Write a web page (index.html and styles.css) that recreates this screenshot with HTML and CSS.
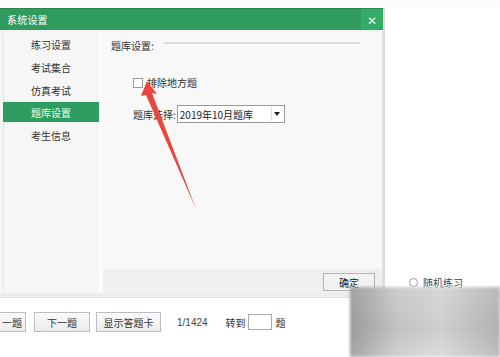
FILE: index.html
```html
<!DOCTYPE html>
<html lang="zh">
<head>
<meta charset="utf-8">
<link rel="stylesheet" href="styles.css">
</head>
<body>
<div class="app">
  <div class="topgap"></div>
  <div class="main">
    <div class="dialog">
      <div class="titlebar">
        <span class="title">系统设置</span>
        <span class="close">✕</span>
      </div>
      <div class="dbody">
        <div class="sidebar">
          <div class="nav">练习设置</div>
          <div class="nav">考试集合</div>
          <div class="nav">仿真考试</div>
          <div class="nav active">题库设置</div>
          <div class="nav">考生信息</div>
        </div>
        <div class="gutter"></div>
        <div class="right">
          <div class="content">
            <div class="section">
              <span class="stitle">题库设置:</span>
              <span class="sline"></span>
            </div>
            <label class="check"><span class="box"></span>排除地方题</label>
            <div class="selrow">
              <span class="sellabel">题库选择:</span>
              <span class="select"><span class="selval">2019年10月题库</span><span class="selbtn"><span class="tri"></span></span></span>
            </div>
          </div>
          <div class="footer">
            <span class="btn ok">确定</span>
          </div>
        </div>
      </div>
    </div>
    <div class="side">
      <div class="radio"><span class="circle"></span>随机练习</div>
    </div>
  </div>
  <div class="sep"></div>
  <div class="toolbar">
    <span class="tbtn first">一题</span>
    <span class="tbtn next">下一题</span>
    <span class="tbtn card">显示答题卡</span>
    <span class="count">1/1424</span>
    <span class="goto">转到</span>
    <span class="gbox"></span>
    <span class="ti">题</span>
  </div>
</div>
<div class="watermark"></div>
<svg class="arrow" width="500" height="357" viewBox="0 0 500 357">
  <polygon points="147,81 141,96 146,95 196,209 152,93 157,94" fill="#e8463e"/>
</svg>
</body>
</html>
```
FILE: styles.css
```css
* { box-sizing: border-box; }
html, body { margin: 0; padding: 0; }
body {
  width: 500px;
  height: 357px;
  overflow: hidden;
  background: #ffffff;
  font-family: "Noto Sans CJK SC", "Noto Sans", sans-serif;
  font-size: 10px;
  color: #333;
  position: relative;
}
.app { display: flex; flex-direction: column; width: 500px; height: 357px; }
.topgap { height: 8px; background: #fcfcfc; }
.main { display: flex; height: 285px; }
.dialog {
  width: 385px;
  display: flex;
  flex-direction: column;
  border-right: 2px solid #dcdcdc;
  background: #f4f4f4;
}
.titlebar {
  height: 22px;
  background: #2f9b5d;
  border-top: 1px solid #278650;
  display: flex;
  align-items: center;
  justify-content: space-between;
  padding-left: 7px;
  color: #fff;
}
.title { font-size: 10px; letter-spacing: 0.2px; }
.close {
  width: 22px;
  height: 21px;
  background: #35ab68;
  display: flex;
  align-items: center;
  justify-content: center;
  font-size: 12px;
  color: #e6fff0;
}
.dbody { flex: 1; display: flex; padding: 3px 0 0 3px; background: #f4f4f4; }
.sidebar {
  width: 96px;
  background: #f6f6f6;
  border-left: 1px solid #e6e6e6;
  display: flex;
  flex-direction: column;
  padding-top: 0;
}
.nav {
  height: 23px;
  display: flex;
  align-items: center;
  padding-left: 27px;
  font-size: 10px;
  color: #333;
}
.nav.active {
  background: #2f9d60;
  color: #e8fff0;
  height: 20px;
  margin: 0 -1px 0 -1px;
  padding-left: 28px;
}
.nav.active + .nav { margin-top: 2px; }
.gutter { width: 4px; background: #fbfbfb; }
.right { flex: 1; display: flex; flex-direction: column; border-right: 1px solid #e2e2e2; }
.content { flex: 1; background: #f8f8f8; padding: 5px 0 0 8px; }
.section { display: flex; align-items: center; height: 14px; }
.stitle { font-size: 10px; color: #333; }
.sline { flex: 1; height: 2px; background: #dcdcdc; margin: 0 22px 0 10px; position: relative; top: -2px; }
.check { display: flex; align-items: center; margin: 23px 0 0 22px; font-size: 10px; color: #333; }
.box { width: 10px; height: 10px; border: 1px solid #999; background: #fff; margin-right: 4px; }
.selrow { display: flex; align-items: center; margin: 15px 0 0 22px; }
.sellabel { font-size: 10px; color: #333; margin-right: 1px; }
.select {
  width: 108px;
  height: 18px;
  border: 1px solid #9a9a9a;
  background: #fff;
  display: flex;
  align-items: center;
  justify-content: space-between;
}
.selval { font-size: 10px; color: #222; padding-left: 2px; }
.selbtn { width: 12px; height: 14px; border-left: 1px solid #ddd; display: flex; align-items: center; justify-content: center; margin-right: 1px; }
.tri { width: 0; height: 0; border-left: 3px solid transparent; border-right: 3px solid transparent; border-top: 4px solid #222; }
.footer { height: 24px; background: #efefef; display: flex; align-items: flex-start; justify-content: flex-end; padding: 4px 7px 0 0; }
.btn {
  width: 52px;
  height: 18px;
  border: 1px solid #b4b4b4;
  background: #f2f2f2;
  display: flex;
  align-items: center;
  justify-content: center;
  font-size: 10px;
  color: #222;
}
.side { flex: 1; display: flex; flex-direction: column; justify-content: flex-end; padding: 0 0 3px 24px; }
.radio { display: flex; align-items: center; font-size: 10px; color: #444; }
.circle { width: 9px; height: 9px; border: 1px solid #999; border-radius: 50%; margin-right: 5px; }
.sep { height: 5px; background: #ececec; border-bottom: 1px solid #dedede; }
.toolbar { display: flex; align-items: center; height: 48px; }
.tbtn {
  height: 20px;
  border: 1px solid #bdbdbd;
  background: linear-gradient(#fafafa, #ececec);
  display: flex;
  align-items: center;
  justify-content: center;
  font-size: 10px;
  color: #333;
}
.tbtn.first { width: 28px; margin-left: -2px; }
.tbtn.next { width: 56px; margin-left: 8px; }
.tbtn.card { width: 65px; margin-left: 6px; }
.count { margin-left: 16px; font-family: "Liberation Sans", sans-serif; font-size: 10px; color: #444; }
.goto { margin-left: 18px; font-size: 10px; color: #333; }
.gbox { width: 24px; height: 16px; border: 1px solid #aaa; background: #fff; margin-left: 2px; }
.ti { margin-left: 4px; font-size: 10px; color: #333; }
.watermark {
  position: absolute;
  left: 350px;
  top: 287px;
  width: 150px;
  height: 70px;
  background:
    linear-gradient(90deg, rgba(120,120,120,0.55), rgba(190,190,190,0.35) 30%, rgba(225,225,225,0.4) 60%, rgba(160,160,160,0.5)),
    linear-gradient(#d2d2d2, #c2c2c2 60%, #dadada);
  filter: blur(1.5px);
}
.arrow { position: absolute; left: 0; top: 0; }
```
